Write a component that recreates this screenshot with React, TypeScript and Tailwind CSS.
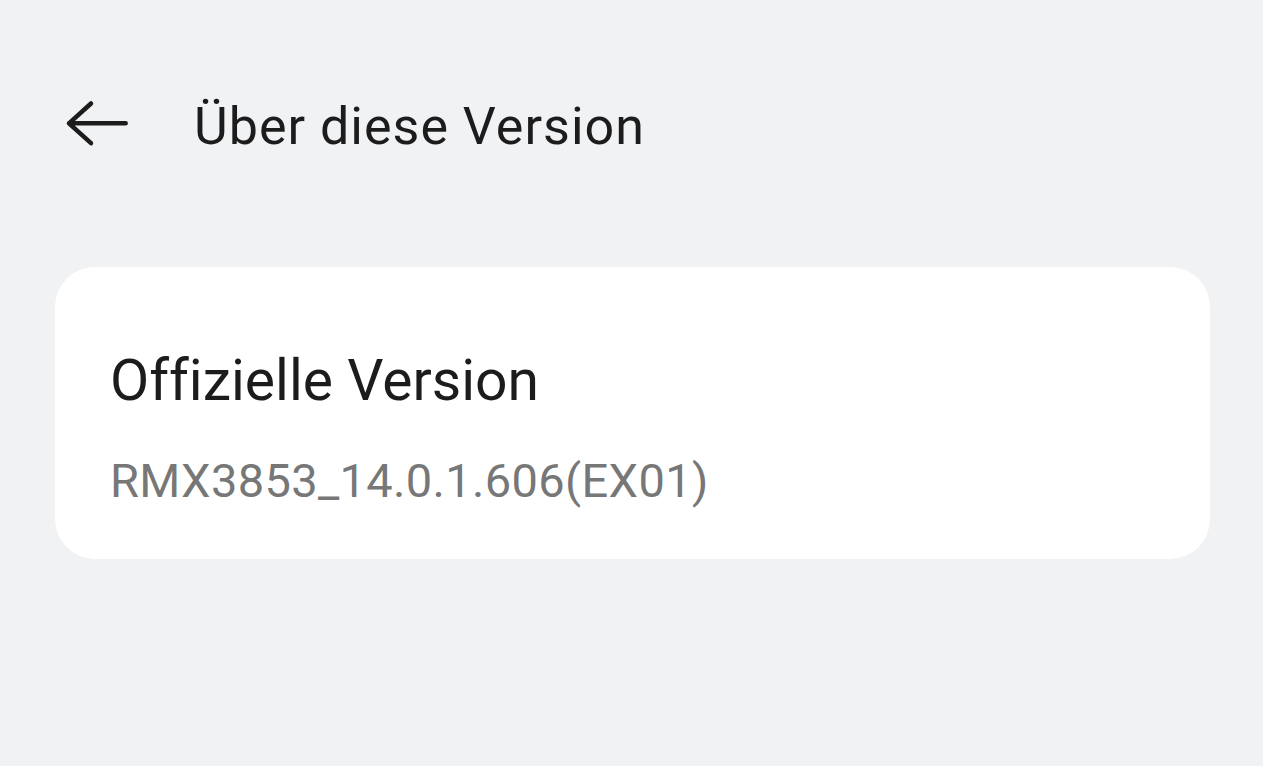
import React from "react";

export default function App() {
  return (
    <div className="w-[1263px] h-[766px] bg-[#f1f2f4] overflow-hidden font-['Roboto',sans-serif] [font-variant-ligatures:none]">
      <div className="flex items-start pl-[62px] pt-[96px]">
        <svg width="70" height="62" viewBox="0 0 70 62" fill="none" className="shrink-0">
          <path
            d="M7 27.3 H63.7 M29 7.5 L7 27.3 L29 47.2"
            stroke="#1c1c1c"
            strokeWidth="4.5"
            strokeLinecap="round"
            strokeLinejoin="round"
          />
        </svg>
        <div className="ml-[62px] text-[52px] leading-[62px] tracking-[1px] text-[#1c1c1c]">
          Über diese Version
        </div>
      </div>
      <div className="mt-[109px] ml-[55px] w-[1155px] h-[292px] bg-white rounded-[40px] pl-[55px] pt-[80px]">
        <div className="text-[57px] leading-[68px] text-[#1c1c1c]">Offizielle Version</div>
        <div className="mt-[38px] text-[47px] leading-[56px] tracking-[0.35px] text-[#777777]">
          RMX3853_14.0.1.606(EX01)
        </div>
      </div>
    </div>
  );
}
